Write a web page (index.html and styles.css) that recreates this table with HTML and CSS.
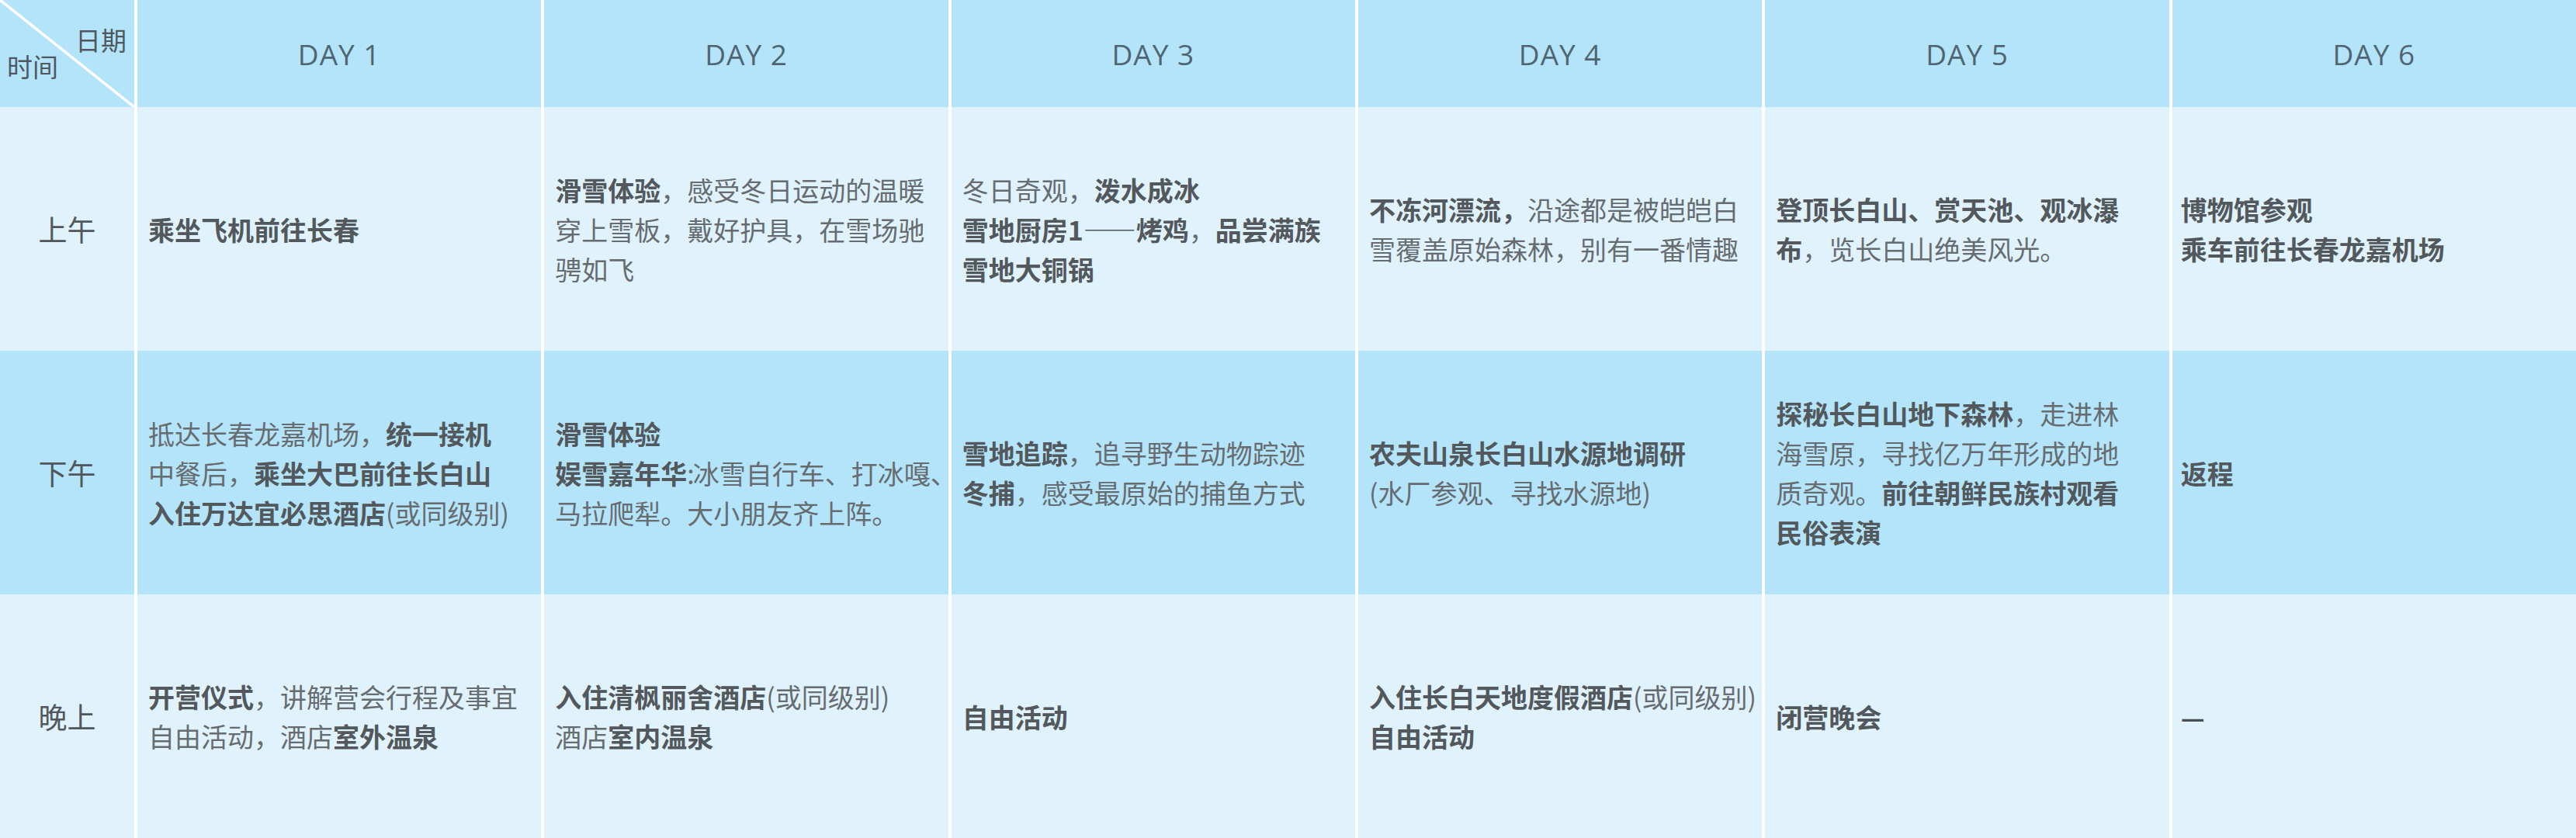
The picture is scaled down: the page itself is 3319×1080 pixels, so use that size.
FILE: index.html
```html
<!DOCTYPE html>
<html lang="zh-CN">
<head>
<meta charset="utf-8">
<title>行程表</title>
<link rel="stylesheet" href="styles.css">
</head>
<body>
<div class="schedule">
  <div class="cell head corner">
    <svg class="diag" viewBox="0 0 173 138" preserveAspectRatio="none"><line x1="0" y1="0" x2="173" y2="138" stroke="#ffffff" stroke-width="3.5"/></svg>
    <div class="corner-date">日期</div>
    <div class="corner-time">时间</div>
  </div>
  <div class="cell head day">DAY 1</div>
  <div class="cell head day">DAY 2</div>
  <div class="cell head day">DAY 3</div>
  <div class="cell head day">DAY 4</div>
  <div class="cell head day">DAY 5</div>
  <div class="cell head day">DAY 6</div>

  <div class="cell light label">上午</div>
  <div class="cell light body">
    <div class="ln"><b>乘坐飞机前往长春</b></div>
  </div>
  <div class="cell light body">
    <div class="ln"><b>滑雪体验</b>，感受冬日运动的温暖</div>
    <div class="ln">穿上雪板，戴好护具，在雪场驰</div>
    <div class="ln">骋如飞</div>
  </div>
  <div class="cell light body">
    <div class="ln">冬日奇观，<b>泼水成冰</b></div>
    <div class="ln"><b>雪地厨房1——烤鸡</b>，<b>品尝满族</b></div>
    <div class="ln"><b>雪地大铜锅</b></div>
  </div>
  <div class="cell light body">
    <div class="ln"><b>不冻河漂流，</b>沿途都是被皑皑白</div>
    <div class="ln">雪覆盖原始森林，别有一番情趣</div>
  </div>
  <div class="cell light body">
    <div class="ln"><b>登顶长白山、赏天池、观冰瀑</b></div>
    <div class="ln"><b>布</b>，览长白山绝美风光。</div>
  </div>
  <div class="cell light body last">
    <div class="ln"><b>博物馆参观</b></div>
    <div class="ln"><b>乘车前往长春龙嘉机场</b></div>
  </div>

  <div class="cell mid label">下午</div>
  <div class="cell mid body">
    <div class="ln">抵达长春龙嘉机场，<b>统一接机</b></div>
    <div class="ln">中餐后，<b>乘坐大巴前往长白山</b></div>
    <div class="ln"><b>入住万达宜必思酒店</b>(或同级别)</div>
  </div>
  <div class="cell mid body">
    <div class="ln"><b>滑雪体验</b></div>
    <div class="ln"><b>娱雪嘉年华</b><span class="colon">:</span>冰雪自行车、打冰嘎、</div>
    <div class="ln">马拉爬犁。大小朋友齐上阵。</div>
  </div>
  <div class="cell mid body">
    <div class="ln"><b>雪地追踪</b>，追寻野生动物踪迹</div>
    <div class="ln"><b>冬捕</b>，感受最原始的捕鱼方式</div>
  </div>
  <div class="cell mid body">
    <div class="ln"><b>农夫山泉长白山水源地调研</b></div>
    <div class="ln">(水厂参观、寻找水源地)</div>
  </div>
  <div class="cell mid body">
    <div class="ln"><b>探秘长白山地下森林</b>，走进林</div>
    <div class="ln">海雪原，寻找亿万年形成的地</div>
    <div class="ln">质奇观。<b>前往朝鲜民族村观看</b></div>
    <div class="ln"><b>民俗表演</b></div>
  </div>
  <div class="cell mid body last">
    <div class="ln"><b>返程</b></div>
  </div>

  <div class="cell light label">晚上</div>
  <div class="cell light body">
    <div class="ln"><b>开营仪式</b>，讲解营会行程及事宜</div>
    <div class="ln">自由活动，酒店<b>室外温泉</b></div>
  </div>
  <div class="cell light body">
    <div class="ln"><b>入住清枫丽舍酒店</b>(或同级别)</div>
    <div class="ln">酒店<b>室内温泉</b></div>
  </div>
  <div class="cell light body">
    <div class="ln"><b>自由活动</b></div>
  </div>
  <div class="cell light body">
    <div class="ln"><b>入住长白天地度假酒店</b>(或同级别)</div>
    <div class="ln"><b>自由活动</b></div>
  </div>
  <div class="cell light body">
    <div class="ln"><b>闭营晚会</b></div>
  </div>
  <div class="cell light body last">
    <div class="ln"><span class="dash">—</span></div>
  </div>
</div>
</body>
</html>
```

FILE: styles.css
```css
html, body {
  margin: 0;
  padding: 0;
  background: #ffffff;
}

body {
  width: 3319px;
  height: 1080px;
  overflow: hidden;
  font-family: "Noto Sans CJK SC", "Noto Sans", sans-serif;
}

.schedule {
  display: grid;
  grid-template-columns: 173px repeat(6, 1fr);
  grid-template-rows: 138px repeat(3, 314px);
  column-gap: 4px;
  width: 3319px;
  height: 1080px;
  background: #ffffff;
}

.cell {
  display: flex;
  flex-direction: column;
  justify-content: center;
  box-sizing: border-box;
  min-width: 0;
}

.head {
  background: #b3e4f9;
}

.light {
  background: #e0f3fd;
}

.mid {
  background: #b3e4f9;
}

.corner {
  position: relative;
  justify-content: flex-start;
  padding-top: 34px;
  color: #4f5860;
  font-size: 33px;
  line-height: 34px;
}

.diag {
  position: absolute;
  left: 0;
  top: 0;
  width: 100%;
  height: 100%;
}

.corner-date {
  align-self: flex-end;
  padding-right: 10px;
}

.corner-time {
  align-self: flex-start;
  padding-left: 9px;
}

.day {
  align-items: center;
  font-family: "Open Sans", "Noto Sans", sans-serif;
  font-size: 37px;
  font-weight: 400;
  letter-spacing: 1px;
  color: #506572;
}

.label {
  align-items: center;
  font-size: 37px;
  color: #51575c;
}

.body {
  align-items: flex-start;
  padding: 0 6px 0 14px;
  font-size: 34px;
  line-height: 51px;
  color: #676c70;
  white-space: nowrap;
}

.body b {
  font-weight: 700;
  color: #53585c;
}

.last {
  padding-left: 11px;
}

.colon {
  letter-spacing: -2px;
}

.dash {
  color: #4a4f53;
  font-weight: 700;
}
```
